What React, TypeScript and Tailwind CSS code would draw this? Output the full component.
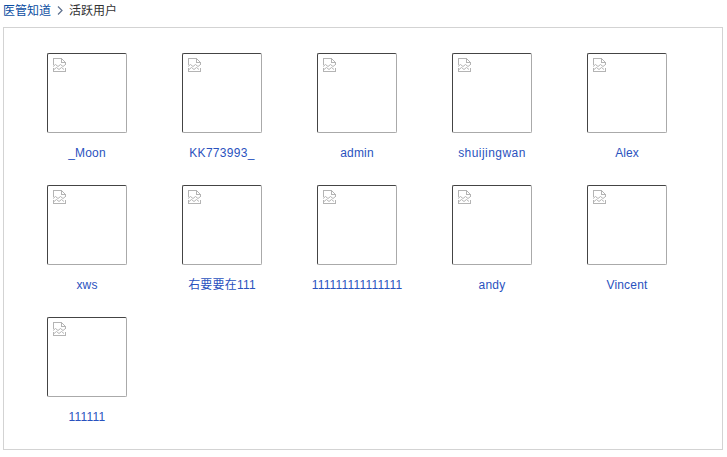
const users = [
  { name: "_Moon", cls: "tracking-[0.2px]" },
  { name: "KK773993_", cls: "tracking-[0.3px]" },
  { name: "admin", cls: "tracking-[0.2px]" },
  { name: "shuijingwan", cls: "tracking-[0.45px]" },
  { name: "Alex", cls: "tracking-[0.1px]" },
  { name: "xws", cls: "tracking-[0.1px]" },
  { name: "右要要在111", cls: "tracking-[0.2px] text-[#1c4aa6]" },
  { name: "111111111111111", cls: "tracking-[0.2px] text-[#1f4aa8]" },
  { name: "andy", cls: "tracking-[0.2px]" },
  { name: "Vincent", cls: "tracking-[0.2px]" },
  { name: "111111", cls: "tracking-[0.2px]" },
];

function BrokenIcon() {
  return (
    <svg width="14" height="15" viewBox="0 0 14 15" fill="none" stroke="#b4b4b4" strokeWidth="1" className="block">
      <path d="M1.5 8V1.5H9L13.5 5.5V8" shapeRendering="crispEdges" />
      <path d="M9.5 1.5V5.5H13.5" shapeRendering="crispEdges" />
      <path d="M1.5 10.5V14.5H13.5V10.5" shapeRendering="crispEdges" />
      <path d="M1 9.5L3.5 7.5L6 9.5L8.5 7.5L11 9.5L13.5 7.5" />
      <path d="M2 12.5L4.5 10.5L7 12.5L9.5 10.5L12 12.5" />
    </svg>
  );
}

export default function App() {
  return (
    <div className="h-[457px] w-[727px] overflow-hidden bg-white font-['Liberation_Sans','Noto_Sans_CJK_SC',sans-serif] text-[12px]">
      <div className="flex h-[27px] items-start pl-[3px] pt-[3px] leading-[17px]">
        <a className="text-[#0b4ea2]">医管知道</a>
        <svg width="6" height="9" viewBox="0 0 6 9" fill="none" className="ml-[6px] mr-[6px] mt-[3px]">
          <path d="M1 0.5L5 4.5L1 8.5" stroke="#5d6f8c" strokeWidth="1.2" />
        </svg>
        <span className="text-[#333333]">活跃用户</span>
      </div>
      <div className="ml-[3px] h-[423px] w-[720px] border border-[#d3d3d3] pl-[15.5px] pt-[25px]">
        <div className="grid grid-cols-[repeat(5,135px)] auto-rows-[132px]">
          {users.map((u) => (
            <div key={u.name} className="flex flex-col items-center">
              <div className="h-[80px] w-[80px] rounded-[2px] border border-[#aaaaaa] border-l-[#444444] border-t-[#444444] pl-[4px] pt-[3px]">
                <BrokenIcon />
              </div>
              <a className={`mt-[12px] leading-[16px] text-[#2a52be] ${u.cls}`}>{u.name}</a>
            </div>
          ))}
        </div>
      </div>
    </div>
  );
}
